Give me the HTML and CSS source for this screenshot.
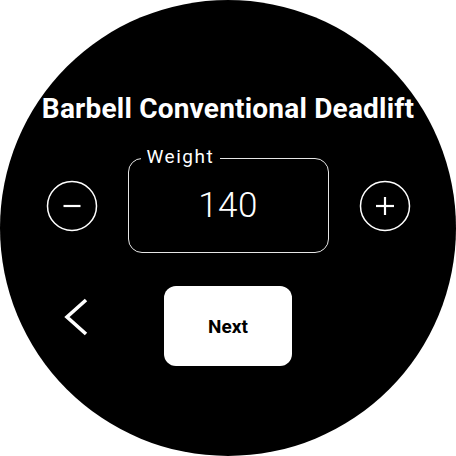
FILE: index.html
```html
<!DOCTYPE html>
<html lang="en">
<head>
    <meta charset="UTF-8">
    <meta name="viewport" content="width=device-width, initial-scale=1.0">
    <title>Weight</title>
    <link rel="stylesheet" href="styles.css">
</head>
<body>

    <div class="watch">
        <h1 class="title">Barbell Conventional Deadlift</h1>

        <div class="stepper">
            <button class="round" aria-label="Decrease">
                <svg width="52" height="52" viewBox="0 0 52 52">
                    <circle cx="26" cy="26" r="24.5" fill="none" stroke="#fff" stroke-width="1.5"/>
                    <line x1="17.5" y1="26" x2="34.5" y2="26" stroke="#fff" stroke-width="2.2"/>
                </svg>
            </button>

            <div class="field">
                <span class="label">Weight</span>
                <span class="value">140</span>
            </div>

            <button class="round" aria-label="Increase">
                <svg width="52" height="52" viewBox="0 0 52 52">
                    <circle cx="26" cy="26" r="24.5" fill="none" stroke="#fff" stroke-width="1.5"/>
                    <line x1="17" y1="26" x2="35" y2="26" stroke="#fff" stroke-width="2.2"/>
                    <line x1="26" y1="17" x2="26" y2="35" stroke="#fff" stroke-width="2.2"/>
                </svg>
            </button>
        </div>

        <div class="actions">
            <button class="back" aria-label="Back">
                <svg width="26" height="42" viewBox="0 0 26 42">
                    <polyline points="22,3 3,20 22,37" fill="none" stroke="#fff" stroke-width="3.6"/>
                </svg>
            </button>
            <button class="next">Next</button>
        </div>
    </div>

</body>
</html>
```

FILE: styles.css
```css
body {
    margin: 0;
    background: #fff;
    font-family: Roboto, "Liberation Sans", sans-serif;
}
.watch {
    width: 456px;
    height: 456px;
    border-radius: 50%;
    background: #000;
    color: #fff;
    display: flex;
    flex-direction: column;
    align-items: center;
}
.title {
    margin: 92px 0 0;
    font-size: 28px;
    line-height: 33px;
    font-weight: 700;
    letter-spacing: 0.2px;
    white-space: nowrap;
}
.stepper {
    margin-top: 33px;
    display: flex;
    align-items: center;
    gap: 30px;
}
button {
    padding: 0;
    border: none;
    background: none;
    color: inherit;
    font-family: inherit;
    cursor: pointer;
}
.round {
    width: 52px;
    height: 52px;
    display: flex;
}
.field {
    position: relative;
    width: 201px;
    height: 95px;
    box-sizing: border-box;
    border: 1.5px solid #e6e6e6;
    border-radius: 14px;
    display: flex;
    justify-content: center;
    align-items: center;
}
.label {
    position: absolute;
    top: -13px;
    left: 12px;
    padding: 0 6px;
    background: #000;
    font-size: 19px;
    line-height: 22px;
    letter-spacing: 1.5px;
}
.value {
    font-size: 35px;
    font-weight: 300;
    letter-spacing: 0.5px;
}
.actions {
    margin-top: 33px;
    width: 100%;
    display: grid;
    grid-template-columns: 1fr auto 1fr;
}
.back {
    justify-self: end;
    margin: 11px 74px 0 0;
    width: 26px;
    height: 42px;
    display: flex;
}
.next {
    width: 128px;
    height: 80px;
    border-radius: 12px;
    background: #fff;
    color: #000;
    font-size: 19px;
    font-weight: 700;
}
```
